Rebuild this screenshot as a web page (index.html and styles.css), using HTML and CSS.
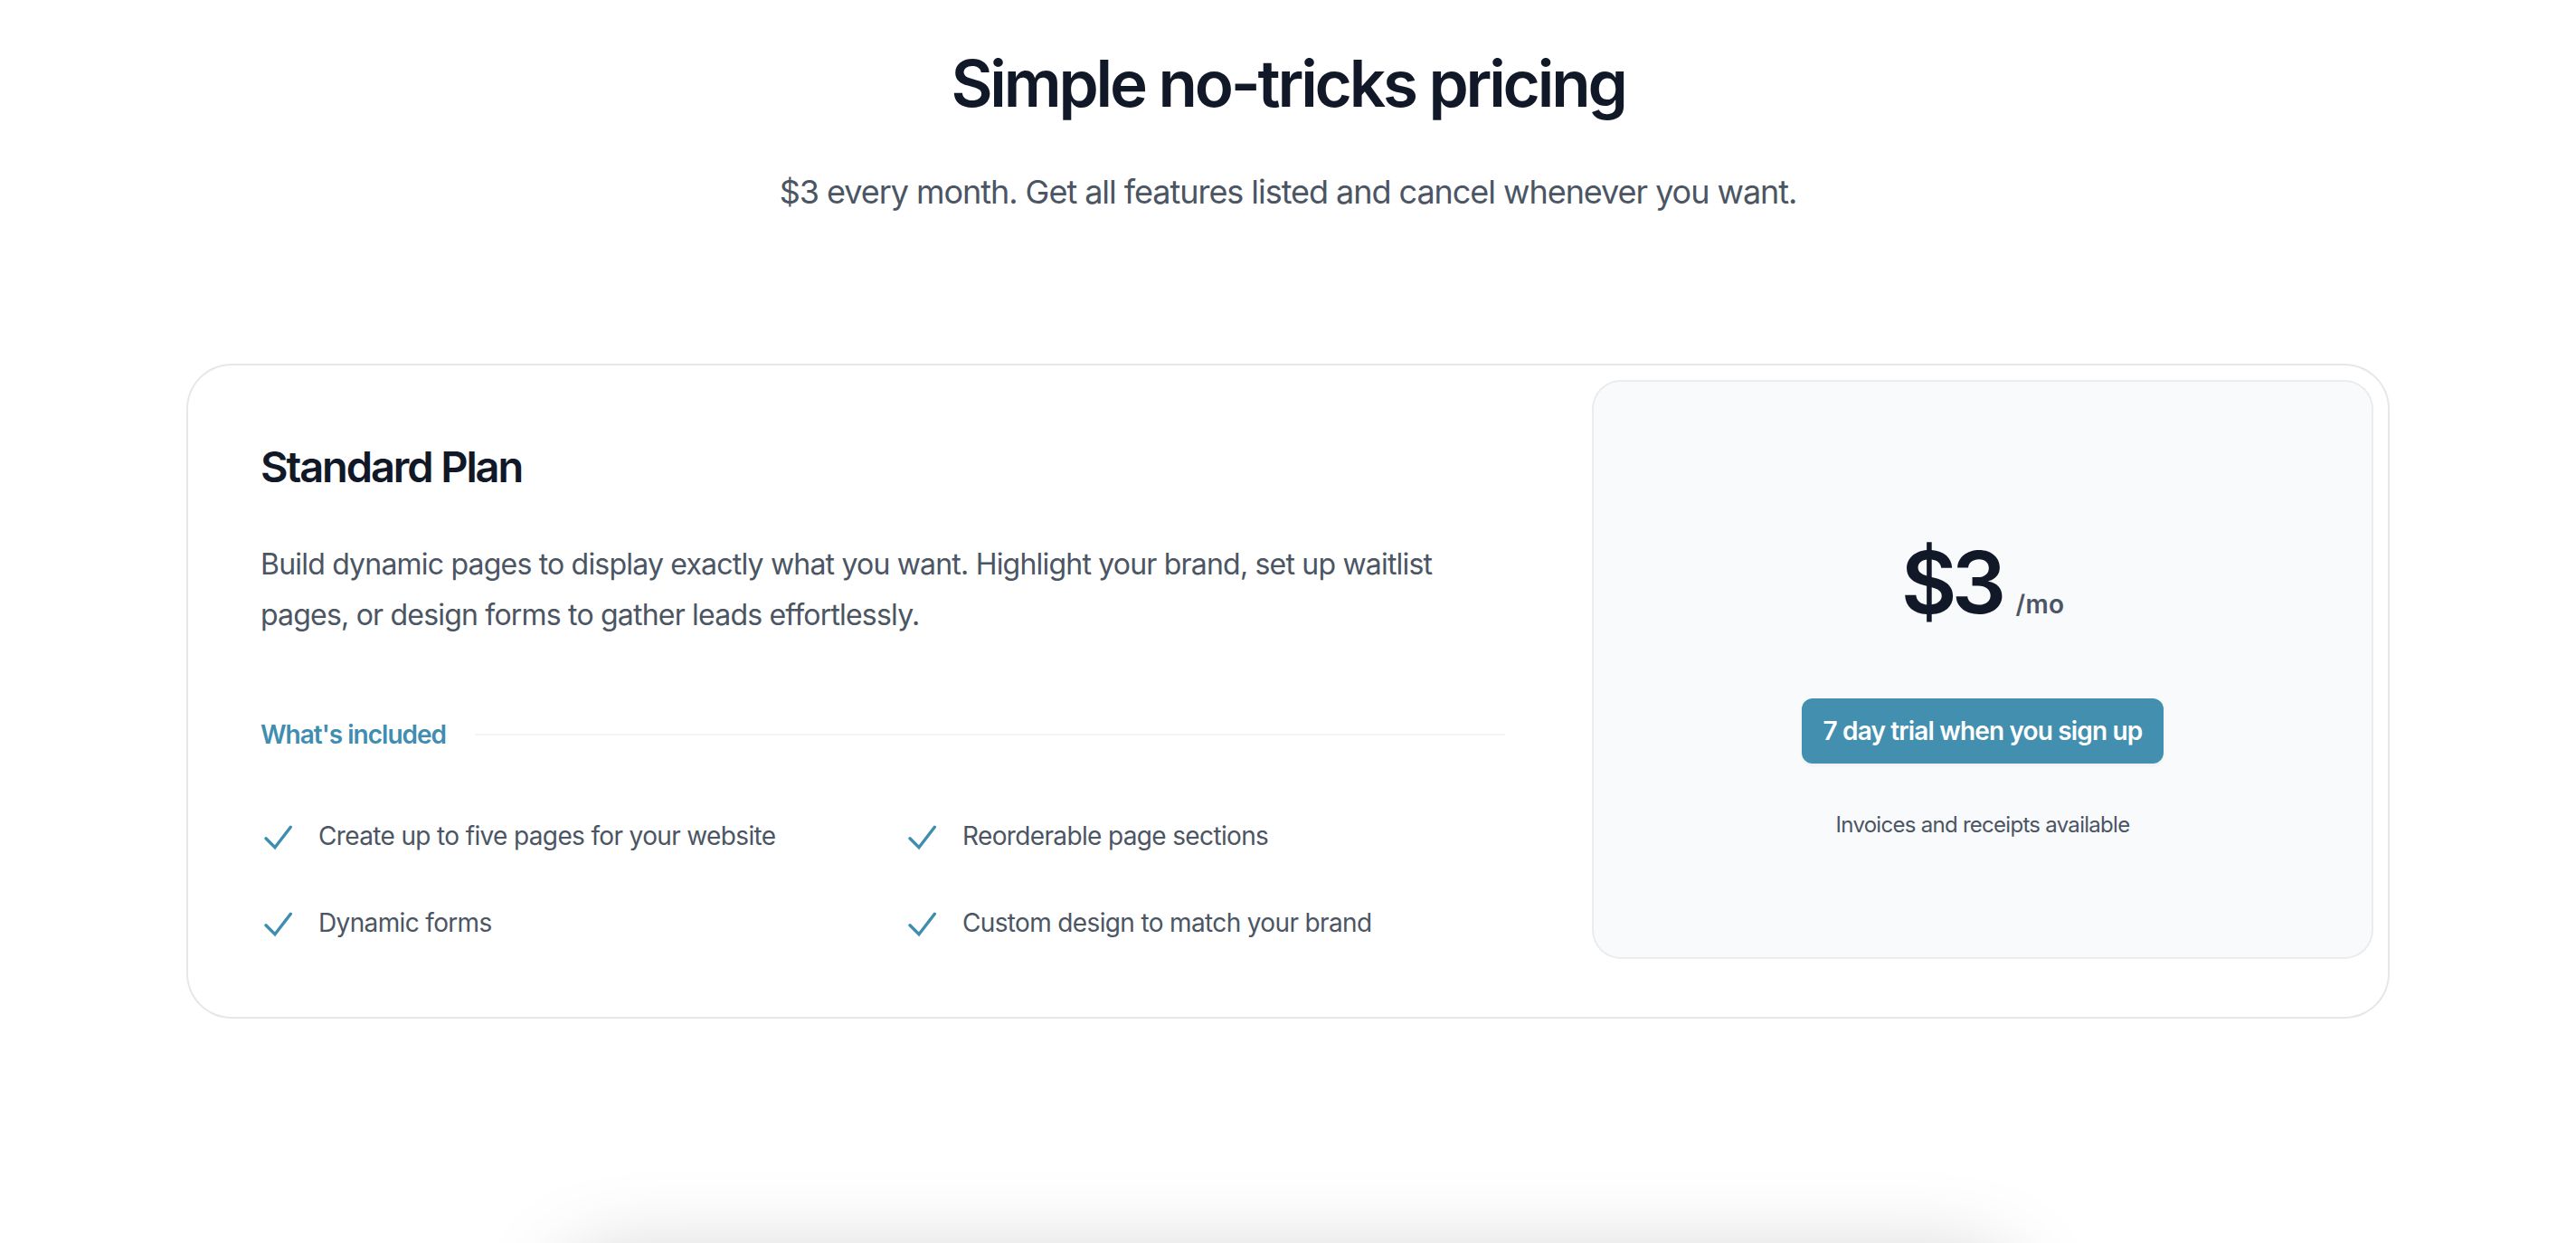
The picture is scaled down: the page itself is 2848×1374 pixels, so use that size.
FILE: index.html
```html
<!DOCTYPE html>
<html lang="en">
<head>
<meta charset="utf-8">
<title>Pricing</title>
<link rel="stylesheet" href="styles.css">
</head>
<body>
<div class="page">
  <section class="pricing">
    <div class="container">
      <div class="header">
        <h2 class="title">Simple no-tricks pricing</h2>
        <p class="subtitle">$3 every month. Get all features listed and cancel whenever you want.</p>
      </div>
      <div class="card">
        <div class="details">
          <h3 class="plan-name">Standard Plan</h3>
          <p class="plan-desc">Build dynamic pages to display exactly what you want. Highlight your brand, set up waitlist pages, or design forms to gather leads effortlessly.</p>
          <div class="included">
            <h4 class="included-label">What's included</h4>
            <div class="included-rule"></div>
          </div>
          <ul class="features">
            <li class="feature">
              <svg class="check" viewBox="0 0 40 48" aria-hidden="true"><path d="M6 26.7 L16 36.7 L33.3 14.3"/></svg>
              <span>Create up to five pages for your website</span>
            </li>
            <li class="feature">
              <svg class="check" viewBox="0 0 40 48" aria-hidden="true"><path d="M6 26.7 L16 36.7 L33.3 14.3"/></svg>
              <span>Reorderable page sections</span>
            </li>
            <li class="feature">
              <svg class="check" viewBox="0 0 40 48" aria-hidden="true"><path d="M6 26.7 L16 36.7 L33.3 14.3"/></svg>
              <span>Dynamic forms</span>
            </li>
            <li class="feature">
              <svg class="check" viewBox="0 0 40 48" aria-hidden="true"><path d="M6 26.7 L16 36.7 L33.3 14.3"/></svg>
              <span>Custom design to match your brand</span>
            </li>
          </ul>
        </div>
        <div class="aside">
          <div class="panel">
            <p class="price"><span class="amount">$3</span><span class="per">/mo</span></p>
            <a class="cta" href="#">7 day trial when you sign up</a>
            <p class="note">Invoices and receipts available</p>
          </div>
        </div>
      </div>
    </div>
  </section>
  <div class="next-card"></div>
</div>
</body>
</html>
```

FILE: styles.css
```css
html, body {
  margin: 0;
  padding: 0;
  background: #ffffff;
}

body {
  height: 100vh;
  overflow: hidden;
  font-family: "Inter", "Liberation Sans", sans-serif;
  color: #4b5563;
}

.page {
  display: flex;
  flex-direction: column;
  align-items: center;
}

.pricing {
  width: 100%;
  padding: 52px 0 272px;
}

.container {
  width: 2432px;
  margin: 0 auto;
}

.header {
  text-align: center;
}

.title {
  margin: 0;
  font-size: 71px;
  line-height: 80px;
  font-weight: 600;
  letter-spacing: -0.045em;
  color: #111827;
}

.subtitle {
  margin: 48px 0 0;
  font-size: 36px;
  line-height: 64px;
  color: #4b5563;
  letter-spacing: -0.029em;
}

.card {
  margin-top: 160px;
  display: flex;
  border-radius: 48px;
  box-shadow: 0 0 0 2px #e5e7eb;
}

.details {
  flex: 1 1 auto;
  padding: 80px;
}

.plan-name {
  margin: 0;
  font-size: 47px;
  line-height: 64px;
  font-weight: 600;
  letter-spacing: -0.045em;
  color: #111827;
}

.plan-desc {
  margin: 48px 0 0;
  font-size: 32px;
  line-height: 56px;
  color: #4b5563;
  letter-spacing: -0.025em;
}

.included {
  margin-top: 80px;
  display: flex;
  align-items: center;
  gap: 32px;
}

.included-label {
  flex: none;
  margin: 0;
  font-size: 28px;
  line-height: 48px;
  font-weight: 600;
  letter-spacing: -0.035em;
  color: #3f8db0;
}

.included-rule {
  flex: 1 1 auto;
  height: 2px;
  background: #f3f4f6;
}

.features {
  list-style: none;
  margin: 64px 0 0;
  padding: 0;
  display: grid;
  grid-template-columns: 1fr 1fr;
  gap: 48px;
  font-size: 28px;
  line-height: 48px;
  color: #4b5563;
  letter-spacing: -0.023em;
}

.feature {
  display: flex;
  gap: 24px;
}

.check {
  flex: none;
  width: 40px;
  height: 48px;
  fill: none;
  stroke: #3f8db0;
  stroke-width: 3.4;
  stroke-linecap: round;
  stroke-linejoin: miter;
}

.aside {
  flex: none;
  width: 896px;
  box-sizing: border-box;
  padding: 16px;
}

.panel {
  border-radius: 32px;
  background: #f9fafb;
  box-shadow: inset 0 0 0 2px rgba(17, 24, 39, 0.06);
  padding: 128px 64px;
  text-align: center;
}

.price {
  margin: 48px 0 0;
  display: flex;
  align-items: baseline;
  justify-content: center;
  gap: 16px;
}

.amount {
  font-size: 95px;
  line-height: 1;
  font-weight: 600;
  letter-spacing: -0.06em;
  color: #111827;
}

.per {
  font-size: 28px;
  line-height: 48px;
  font-weight: 600;
  letter-spacing: 0.01em;
  color: #4b5563;
}

.cta {
  display: block;
  width: fit-content;
  margin: 80px auto 0;
  padding: 16px 24px;
  border-radius: 12px;
  background: #428fb0;
  color: #ffffff;
  font-size: 28px;
  line-height: 40px;
  font-weight: 600;
  letter-spacing: -0.03em;
  text-decoration: none;
  box-shadow: 0 2px 4px rgba(0, 0, 0, 0.05);
}

.note {
  margin: 48px 0 0;
  font-size: 24px;
  line-height: 40px;
  color: #4b5563;
  letter-spacing: -0.03em;
}

.next-card {
  width: 1600px;
  height: 400px;
  border-radius: 48px;
  background: #ffffff;
  box-shadow: 0 0 100px rgba(0, 0, 0, 0.22);
}
```
